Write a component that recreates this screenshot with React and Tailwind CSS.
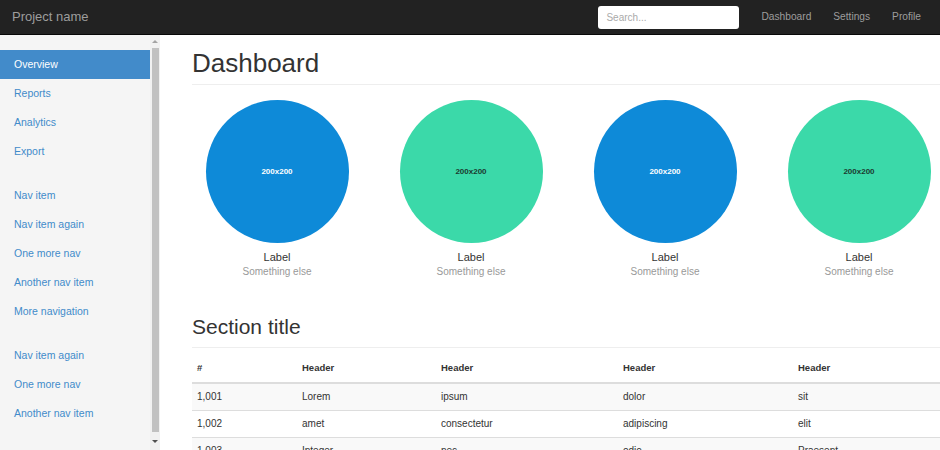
import React from "react";

const groups = [
  ["Overview", "Reports", "Analytics", "Export"],
  ["Nav item", "Nav item again", "One more nav", "Another nav item", "More navigation"],
  ["Nav item again", "One more nav", "Another nav item"],
];

const circles = [
  { bg: "bg-[#0e8ad8]", text: "text-white" },
  { bg: "bg-[#3bd9a9]", text: "text-[#1b3a30]" },
  { bg: "bg-[#0e8ad8]", text: "text-white" },
  { bg: "bg-[#3bd9a9]", text: "text-[#1b3a30]" },
];

const rows = [
  ["1,001", "Lorem", "ipsum", "dolor", "sit"],
  ["1,002", "amet", "consectetur", "adipiscing", "elit"],
  ["1,003", "Integer", "nec", "odio", "Praesent"],
];

const colW = ["w-[105px]", "w-[139px]", "w-[182px]", "w-[175px]", "w-[200px]"];

const App = () => {
  return (
    <div className="h-[450px] w-[940px] overflow-hidden flex flex-col bg-white font-['Liberation_Sans',Arial,sans-serif] text-[#333]">
      <header className="h-[35px] shrink-0 bg-[#222] border-b border-[#080808] flex items-center pl-[12px] pr-[19px]">
        <span className="text-[13px] text-[#9d9d9d]">Project name</span>
        <div className="ml-auto flex items-center">
          <input
            placeholder="Search..."
            className="w-[141px] h-[23px] bg-white rounded-[3px] px-[8px] text-[10px] text-[#555] placeholder:text-[#aaa] outline-none"
          />
          <nav className="flex items-center ml-[22px] gap-[22px] text-[10.2px] text-[#9d9d9d]">
            <span>Dashboard</span>
            <span>Settings</span>
            <span>Profile</span>
          </nav>
        </div>
      </header>

      <div className="flex flex-1 min-h-0">
        <aside className="w-[160px] shrink-0 flex bg-[#f5f5f5]">
          <div className="w-[150px] pt-[15px]">
            {groups.map((g, gi) => (
              <ul key={gi} className={gi > 0 ? "mt-[15px]" : ""}>
                {g.map((item, i) => {
                  const active = gi === 0 && i === 0;
                  return (
                    <li
                      key={i}
                      className={`h-[29px] flex items-center pl-[14px] text-[10.5px] ${
                        active ? "bg-[#428bca] text-white" : "text-[#428bca]"
                      }`}
                    >
                      {item}
                    </li>
                  );
                })}
              </ul>
            ))}
          </div>
          <div className="w-[10px] bg-[#f1f1f1] flex flex-col items-center">
            <div className="h-[13px] flex items-center justify-center">
              <span className="w-0 h-0 border-l-[3px] border-r-[3px] border-b-[3px] border-l-transparent border-r-transparent border-b-[#a3a3a3]" />
            </div>
            <div className="w-[7px] h-[384px] bg-[#c1c1c1]" />
            <div className="flex-1 flex items-center justify-center">
              <span className="w-0 h-0 border-l-[3px] border-r-[3px] border-t-[3px] border-l-transparent border-r-transparent border-t-[#505050]" />
            </div>
          </div>
        </aside>

        <main className="flex-1 min-w-0 overflow-hidden pl-[32px] pt-[14px]">
          <div className="pb-[7px] border-b border-[#eee] w-[900px]">
            <h1 className="text-[26px] leading-[28px] text-[#333]">Dashboard</h1>
          </div>

          <div className="flex ml-[-12px] mt-[15px]">
            {circles.map((c, i) => (
              <div key={i} className="w-[194px] shrink-0 flex flex-col items-center">
                <div
                  className={`w-[143px] h-[143px] rounded-full ${c.bg} ${c.text} flex items-center justify-center text-[8px] font-bold`}
                >
                  200x200
                </div>
                <h4 className="mt-[7px] text-[11px] leading-[14px] text-[#333]">Label</h4>
                <span className="mt-[1px] text-[10px] leading-[14px] text-[#999]">Something else</span>
              </div>
            ))}
          </div>

          <div className="mt-[36px] pb-[8px] border-b border-[#eee] w-[900px]">
            <h2 className="text-[21px] leading-[24px] text-[#333]">Section title</h2>
          </div>

          <table className="mt-[7px] w-[801px] table-fixed border-collapse text-[10px]">
            <thead>
              <tr className="h-[28px] border-b-2 border-[#ddd]">
                {["#", "Header", "Header", "Header", "Header"].map((h, i) => (
                  <th key={i} className={`${colW[i]} text-left font-bold text-[9.5px] px-[5px]`}>
                    {h}
                  </th>
                ))}
              </tr>
            </thead>
            <tbody>
              {rows.map((r, ri) => (
                <tr
                  key={ri}
                  className={`h-[27px] border-t border-[#ddd] ${ri % 2 === 0 ? "bg-[#f9f9f9]" : "bg-white"}`}
                >
                  {r.map((cell, ci) => (
                    <td key={ci} className="px-[5px] text-[#333]">
                      {cell}
                    </td>
                  ))}
                </tr>
              ))}
            </tbody>
          </table>
        </main>
      </div>
    </div>
  );
};

export default App;
